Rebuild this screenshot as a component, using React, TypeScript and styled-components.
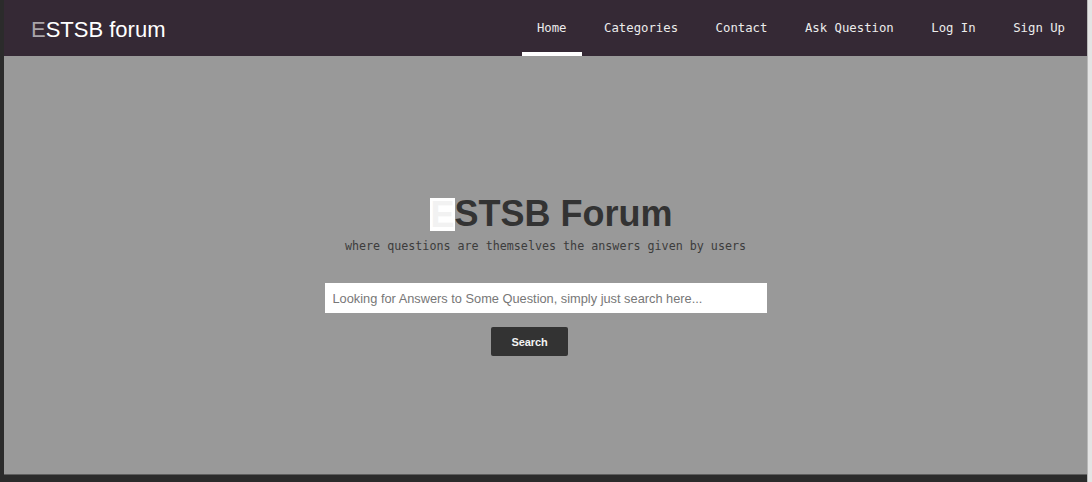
import React from "react";
import styled, { createGlobalStyle } from "styled-components";

const Global = createGlobalStyle`
  html, body { margin: 0; padding: 0; background: #2b2b2b; overflow: hidden; }
  * { box-sizing: border-box; }
`;

const Frame = styled.div`
  display: flex;
  width: 1092px;
  height: 482px;
  background: #2b2b2b;
  padding-left: 4px;
`;

const Page = styled.div`
  flex: 1;
  display: flex;
  flex-direction: column;
  height: 475px;
`;

const Scrollbar = styled.div`
  width: 5px;
  background: #e4e4e4;
  border-left: 1px solid #b8b8b8;
`;

const NavBar = styled.header`
  height: 56px;
  background: #352935;
  display: flex;
  justify-content: space-between;
  padding: 0 7px 0 27px;
`;

const Brand = styled.div`
  font-family: "Liberation Sans", Arial, sans-serif;
  font-size: 22px;
  line-height: 26px;
  padding-top: 17px;
  color: #ffffff;
`;

const BrandE = styled.span`
  color: #a9a4a9;
`;

const NavList = styled.nav`
  display: flex;
  gap: 7.5px;
`;

const NavLink = styled.a<{ $active?: boolean }>`
  position: relative;
  padding: 21px 15px 0;
  font-family: "DejaVu Sans Mono", "Liberation Mono", monospace;
  font-size: 12.3px;
  line-height: 15px;
  color: #ececec;
  text-decoration: none;
  &::after {
    content: "";
    position: absolute;
    left: 0;
    right: 0;
    bottom: 0;
    height: 4px;
    background: ${(p) => (p.$active ? "#ffffff" : "transparent")};
  }
`;

const Hero = styled.main`
  flex: 1;
  background: #999999;
  border-bottom: 1px solid #5e5e5e;
  display: flex;
  flex-direction: column;
  align-items: center;
  padding-top: 137px;
`;

const Title = styled.h1`
  margin: 0 0 0 12px;
  font-family: "Liberation Sans", Arial, sans-serif;
  font-weight: bold;
  font-size: 36px;
  line-height: 41px;
  color: #333333;
`;

const TitleE = styled.span`
  display: inline-block;
  background: #ffffff;
  color: #f2f2f2;
  line-height: 33px;
  vertical-align: -1px;
`;

const Subtitle = styled.p`
  margin: 5px 0 0;
  font-family: "DejaVu Sans Mono", "Liberation Mono", monospace;
  font-size: 11.7px;
  line-height: 14px;
  color: #3c3c3c;
`;

const SearchInput = styled.input`
  margin-top: 30px;
  width: 442px;
  height: 30px;
  border: none;
  outline: none;
  padding: 0 8px;
  background: #ffffff;
  font-family: "Liberation Sans", Arial, sans-serif;
  font-size: 12.8px;
  color: #333;
  &::placeholder { color: #777777; }
`;

const SearchButton = styled.button`
  margin: 14px 32px 0 0;
  width: 77px;
  height: 29px;
  border: none;
  border-radius: 2px;
  background: #333333;
  color: #f2f2f2;
  font-family: "Liberation Sans", Arial, sans-serif;
  font-weight: bold;
  font-size: 11px;
  letter-spacing: -0.1px;
  cursor: pointer;
`;

const links = ["Home", "Categories", "Contact", "Ask Question", "Log In", "Sign Up"];

export default function App() {
  return (
    <>
      <Global />
      <Frame>
        <Page>
          <NavBar>
            <Brand>
              <BrandE>E</BrandE>STSB forum
            </Brand>
            <NavList>
              {links.map((l, i) => (
                <NavLink key={l} href="#" $active={i === 0}>
                  {l}
                </NavLink>
              ))}
            </NavList>
          </NavBar>
          <Hero>
            <Title>
              <TitleE>E</TitleE>STSB Forum
            </Title>
            <Subtitle>where questions are themselves the answers given by users</Subtitle>
            <SearchInput placeholder="Looking for Answers to Some Question, simply just search here..." />
            <SearchButton>Search</SearchButton>
          </Hero>
        </Page>
        <Scrollbar />
      </Frame>
    </>
  );
}
